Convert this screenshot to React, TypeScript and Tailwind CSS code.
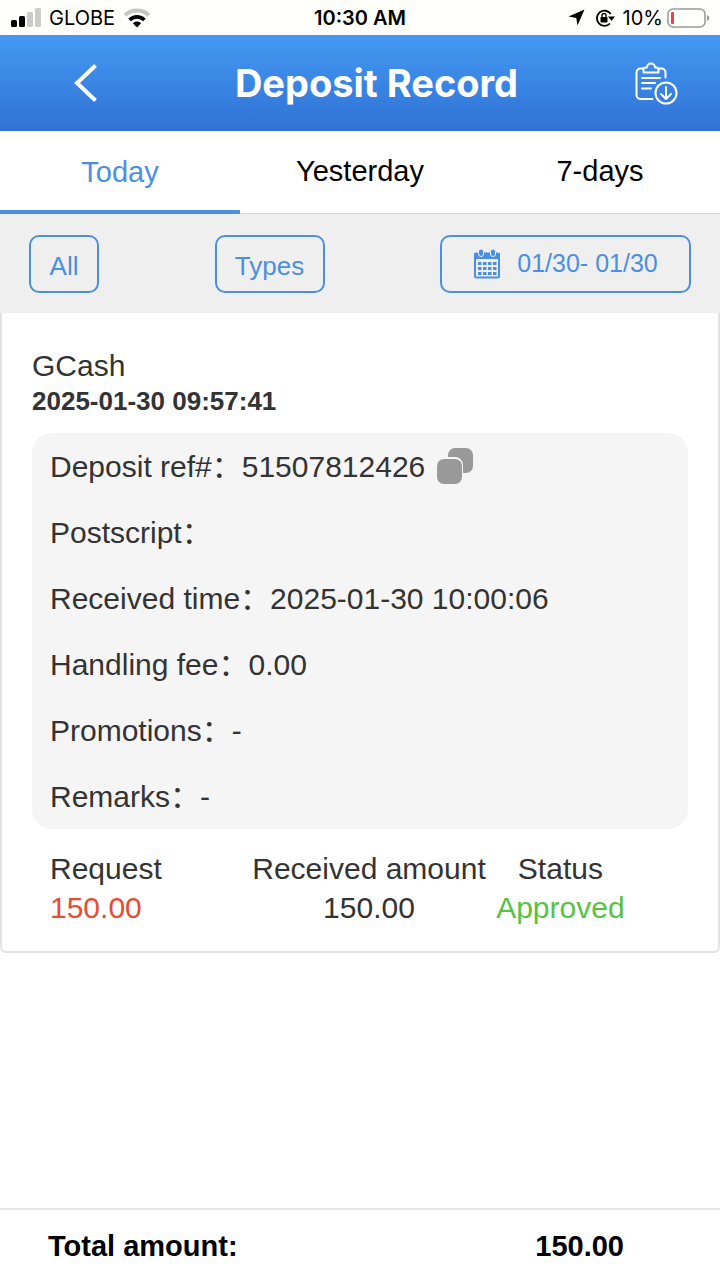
import { useState } from "react";

const tabs = ["Today", "Yesterday", "7-days"];

const details = [
  { label: "Deposit ref#", value: "51507812426", copyable: true },
  { label: "Postscript", value: "" },
  { label: "Received time", value: "2025-01-30 10:00:06" },
  { label: "Handling fee", value: "0.00" },
  { label: "Promotions", value: "-" },
  { label: "Remarks", value: "-" },
];

function StatusBar() {
  return (
    <div className="grid h-[35px] grid-cols-3 items-center bg-[#fffffb] px-[10px] font-['Inter',sans-serif] text-xl text-black">
      <div className="flex items-center gap-2">
        <svg width="31" height="19" viewBox="0 0 31 19" aria-hidden="true">
          <rect x="1" y="12" width="6" height="7" rx="1.5" fill="#000" />
          <rect x="9" y="8" width="6" height="11" rx="1.5" fill="#000" />
          <rect x="17" y="4" width="6" height="15" rx="1.5" fill="#cbcbc9" />
          <rect x="25" y="0" width="6" height="19" rx="1.5" fill="#cbcbc9" />
        </svg>
        <span>GLOBE</span>
        <svg width="28" height="20" viewBox="0 0 28 20" fill="none" aria-hidden="true">
          <path d="M2 7.2C8.5 .8 19.5 .8 26 7.2" stroke="#c6c6c4" strokeWidth="4" />
          <path d="M6.600 12C10.800 7.800 17.200 7.800 21.400 12" stroke="#000" strokeWidth="3.800" />
          <path d="M14 19.500L9.800 15.300C12.200 13 15.800 13 18.200 15.300Z" fill="#000" />
        </svg>
      </div>
      <div className="text-center font-semibold">10:30 AM</div>
      <div className="flex items-center justify-end">
        <svg width="17" height="17" viewBox="0 0 17 17" className="mr-[10px]" aria-hidden="true">
          <path d="M16.500 .5L9.500 16.500L8.300 9L.5 7.600Z" fill="#000" />
        </svg>
        <svg width="20" height="18" viewBox="0 0 20 18" fill="none" className="mr-2" aria-hidden="true">
          <path d="M15.800 5A7.600 7.600 0 1 0 15 14.500" stroke="#000" strokeWidth="1.800" />
          <path d="M13 7.500H20L16.500 12Z" fill="#000" />
          <rect x="5.500" y="8" width="7" height="5.500" rx=".8" fill="#000" />
          <path d="M7 8.500V6.500a2 2 0 0 1 4 0v2" stroke="#000" strokeWidth="1.400" />
        </svg>
        <span>10%</span>
        <svg width="43" height="20" viewBox="0 0 43 20" fill="none" className="ml-1" aria-hidden="true">
          <rect x="1" y="1" width="37" height="18" rx="5" stroke="#9b9b99" strokeWidth="1.600" />
          <rect x="4" y="4" width="3" height="12" rx="1" fill="#eb4048" />
          <path d="M40 7v6c3-1 3-5 0-6Z" fill="#9b9b99" />
        </svg>
      </div>
    </div>
  );
}

function Header() {
  return (
    <header className="flex h-24 items-center justify-between bg-linear-to-b from-[#4499f3] to-[#3072d4] pr-[42px] pl-[73px] text-white">
      <button type="button" aria-label="Back">
        <svg width="26" height="38" viewBox="0 0 26 38" fill="none">
          <path d="M22.500 1.500L4 19L22.500 36.500" stroke="currentColor" strokeWidth="4" />
        </svg>
      </button>
      <h1 className="pl-5 font-['Inter','Liberation_Sans',sans-serif] text-[38px] leading-[44px] font-bold">
        Deposit Record
      </h1>
      <button type="button" aria-label="Export records">
        <svg
          width="44"
          height="44"
          viewBox="0 0 44 44"
          fill="none"
          stroke="currentColor"
          strokeWidth="2"
          strokeLinecap="round"
          strokeLinejoin="round"
        >
          <path d="M18.500 38H6.500a4 4 0 0 1-4-4V11.500a4 4 0 0 1 4-4h3M24 7.500h3.500a4 4 0 0 1 4 4v5" />
          <path d="M9.500 11.500V8.500a2 2 0 0 1 2-2h1.500a4 4 0 0 1 8 0h1.500a2 2 0 0 1 2 2v3Z" />
          <path d="M8 17h18M8 22h13M8 27.500h9" />
          <circle cx="32" cy="32" r="10.500" />
          <path d="M32 26v12M27 33l5 5 5-5" />
        </svg>
      </button>
    </header>
  );
}

function CalendarIcon() {
  return (
    <svg width="28" height="30" viewBox="0 0 28 30" fill="none" aria-hidden="true">
      <rect x="2" y="4.500" width="24" height="24" rx="1.500" stroke="currentColor" strokeWidth="2" />
      <path d="M1 4h26v6H1Z" fill="currentColor" />
      <rect x="5.500" y="0" width="5" height="7.500" rx="2.500" fill="currentColor" stroke="#efefef" />
      <rect x="17.500" y="0" width="5" height="7.500" rx="2.500" fill="currentColor" stroke="#efefef" />
      {[13, 18, 23].map((y) =>
        [5, 10, 15, 20].map((x) => (
          <rect key={`${x}-${y}`} x={x} y={y} width="3.500" height="3" fill="currentColor" />
        )),
      )}
    </svg>
  );
}

function CopyIcon() {
  return (
    <svg width="36" height="36" viewBox="0 0 36 36" fill="#999" aria-hidden="true">
      <rect x="11" y="0" width="25" height="25" rx="7" />
      <rect x="-1" y="9" width="27" height="28" rx="8" fill="#f5f5f5" />
      <rect x="0" y="11" width="25" height="25" rx="7" />
    </svg>
  );
}

function RecordCard() {
  return (
    <article className="rounded-b-md border-x-2 border-b-2 border-[#e2e2e2] px-[30px] pt-[33px] pb-6 text-[#333]">
      <h2 className="text-[30px] leading-10">GCash</h2>
      <p className="text-[26px] leading-[30px] font-bold">2025-01-30 09:57:41</p>
      <dl className="mt-[17px] rounded-[20px] bg-[#f5f5f5] px-[18px] text-[30px]">
        {details.map(({ label, value, copyable }) => (
          <div key={label} className="flex h-[66px] items-center">
            <dt>{label}：</dt>
            <dd className="flex items-center gap-3">
              {value}
              {copyable && (
                <button type="button" aria-label="Copy reference number">
                  <CopyIcon />
                </button>
              )}
            </dd>
          </div>
        ))}
      </dl>
      <div className="mt-5 pr-[58px] pl-[18px]">
        <table className="w-full table-fixed text-center text-[30px] leading-[39px] whitespace-nowrap">
          <thead>
            <tr>
              <th className="w-[34%] text-left font-normal">Request</th>
              <th className="w-[42%] font-normal">Received amount</th>
              <th className="w-[24%] font-normal">Status</th>
            </tr>
          </thead>
          <tbody>
            <tr>
              <td className="text-left text-[#e84c33]">150.00</td>
              <td>150.00</td>
              <td className="text-[#56c344]">Approved</td>
            </tr>
          </tbody>
        </table>
      </div>
    </article>
  );
}

export default function App() {
  const [active, setActive] = useState("Today");

  return (
    <div className="flex min-h-screen flex-col bg-white font-['Liberation_Sans','Noto_Sans_CJK_SC',sans-serif]">
      <StatusBar />
      <Header />

      <nav className="grid h-[83px] grid-cols-3 border-b border-[#d8d8d8] text-[29px]">
        {tabs.map((tab) => (
          <button
            key={tab}
            type="button"
            onClick={() => setActive(tab)}
            className={
              tab === active
                ? "-mb-px border-b-4 border-[#4a90e2] pt-1 text-[#4a90e2]"
                : "text-black"
            }
          >
            {tab}
          </button>
        ))}
      </nav>

      <div className="flex items-center justify-between bg-[#efefef] px-[29px] pt-[21px] pb-5 text-[26px] text-[#4a90e2]">
        <button type="button" className="h-[58px] w-[70px] rounded-[10px] border-2 border-[#4a90e2] pt-1">
          All
        </button>
        <button type="button" className="h-[58px] w-[110px] rounded-[10px] border-2 border-[#4a90e2] pt-1">
          Types
        </button>
        <button
          type="button"
          className="flex h-[58px] w-[251px] items-center justify-center gap-4 rounded-[10px] border-2 border-[#4a90e2] text-[25px]"
        >
          <CalendarIcon />
          01/30- 01/30
        </button>
      </div>

      <main className="flex-1">
        <RecordCard />
      </main>

      <footer className="flex h-[72px] items-center justify-between border-t-2 border-[#e4e4e4] pt-1 pr-24 pl-12 text-[29px] font-bold text-black">
        <span>Total amount:</span>
        <span>150.00</span>
      </footer>
    </div>
  );
}
